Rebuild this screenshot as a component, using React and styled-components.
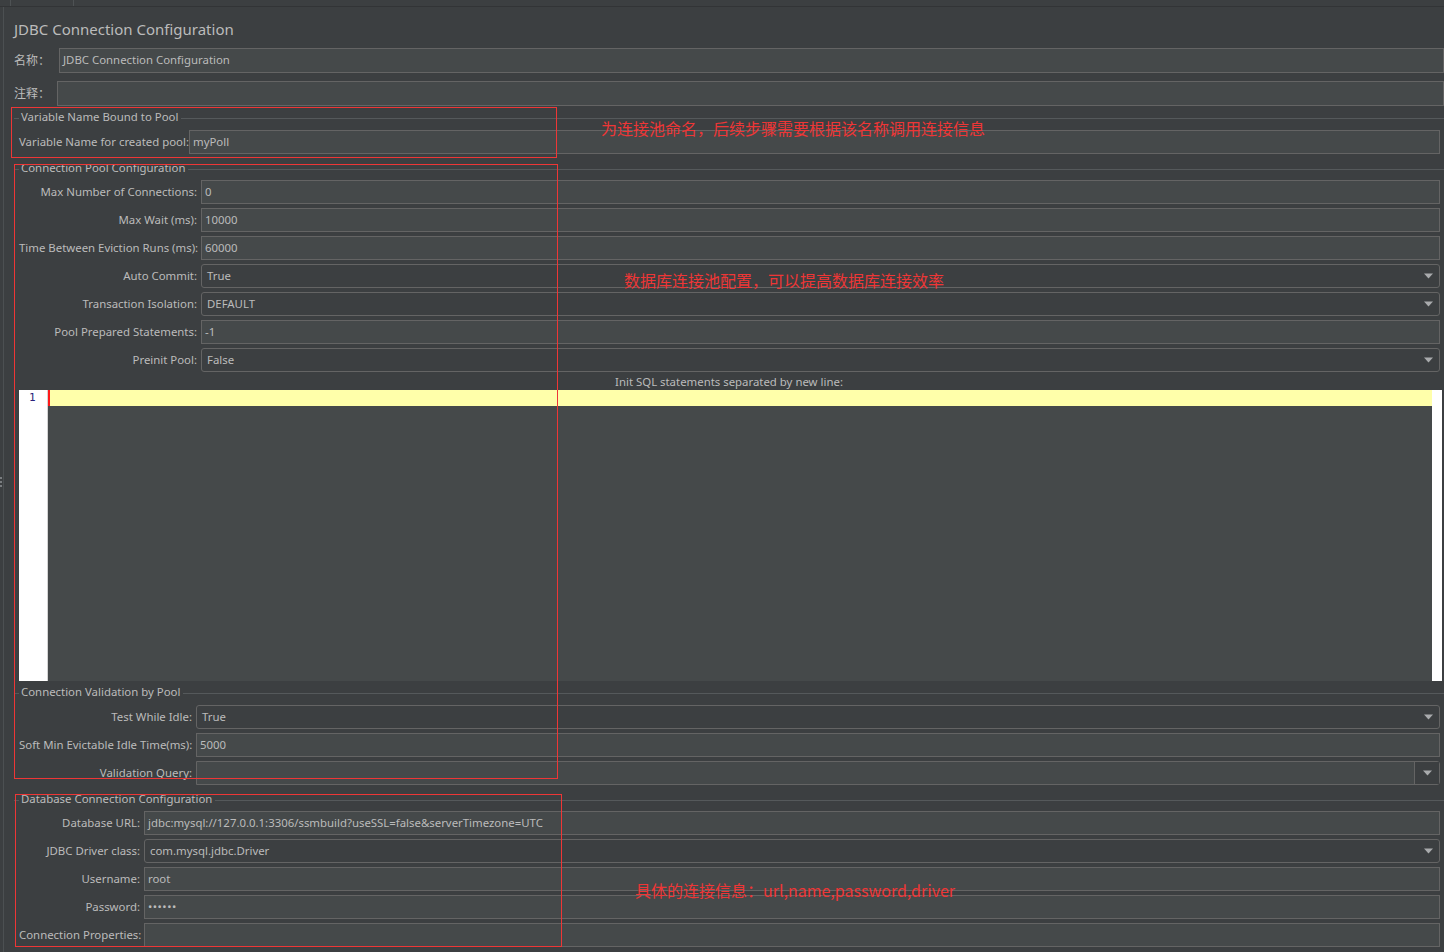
import React from 'react';
import styled, { createGlobalStyle } from 'styled-components';

const GlobalStyle = createGlobalStyle`
  html, body {
    margin: 0;
    padding: 0;
    background: #3c3f41;
  }
  body {
    font-family: "Noto Sans", "Noto Sans CJK SC", sans-serif;
    font-size: 11.4px;
    color: #bbbbbb;
  }
`;

const red = '#ee3636';
const uiSize = '11.4px';

const Page = styled.div`
  position: relative;
  width: 1444px;
  height: 952px;
  overflow: hidden;
  background: #3c3f41;
  display: flex;
  flex-direction: column;
`;

const TabStrip = styled.div`
  height: 6px;
  flex: none;
  display: flex;
  border-bottom: 1px solid #323436;
`;

const TabEdge = styled.div`
  width: ${p => p.$w}px;
  border-right: 1px solid #4e5254;
`;

const Body = styled.div`
  flex: 1;
  display: flex;
  min-height: 0;
`;

const Splitter = styled.div`
  position: relative;
  width: 3px;
  flex: none;
  border-right: 1px solid #4c5052;
`;

const Grip = styled.span`
  position: absolute;
  left: 0;
  top: 470px;
  width: 2px;
  height: 12px;
  background: repeating-linear-gradient(to bottom, #7a7d80 0 2px, transparent 2px 4px);
`;

const Content = styled.div`
  flex: 1;
  min-width: 0;
  padding-left: 10px;
  display: flex;
  flex-direction: column;
`;

const Title = styled.div`
  margin-top: 11px;
  height: 22px;
  line-height: 22px;
  font-size: 15px;
  color: #bbbbbb;
  margin-bottom: 1px;
`;

const TopRow = styled.div`
  display: grid;
  grid-template-columns: ${p => p.$label}px 1fr;
  align-items: center;
  margin-top: ${p => p.$top}px;
  height: 25px;
`;

const Label = styled.span`
  white-space: nowrap;
  text-align: ${p => (p.$left ? 'left' : 'right')};
  color: #bbbbbb;
  font-size: ${p => (p.$cjk ? '12px' : uiSize)};
  padding-bottom: 2px;
`;

const Field = styled.div`
  box-sizing: border-box;
  height: ${p => p.$h || 24}px;
  border: 1px solid #646464;
  background: #45494a;
  padding: 0 3px 2px;
  display: flex;
  align-items: center;
  color: #bbbbbb;
  font-size: ${uiSize};
  white-space: nowrap;
  overflow: hidden;
  letter-spacing: ${p => (p.$dots ? '0.5px' : 'normal')};
`;

const Combo = styled.div`
  box-sizing: border-box;
  height: 24px;
  border: 1px solid #646464;
  border-radius: 3px;
  background: #3c3f41;
  padding: 0 6px 0 5px;
  display: flex;
  align-items: center;
  justify-content: space-between;
  color: #bbbbbb;
  font-size: ${uiSize};
  & > span {
    padding-bottom: 2px;
  }
`;

const EditCombo = styled.div`
  box-sizing: border-box;
  height: 24px;
  border: 1px solid #646464;
  border-radius: 0 3px 3px 0;
  background: #45494a;
  display: flex;
`;

const EditArea = styled.div`
  flex: 1;
`;

const ArrowButton = styled.div`
  width: 23px;
  border-left: 1px solid #646464;
  background: #3c3f41;
  display: flex;
  align-items: center;
  justify-content: center;
  padding-left: 1px;
`;

const Arrow = () => (
  <svg width="9" height="6" viewBox="0 0 9 6">
    <path d="M0 0.5 H9 L4.5 5.5 Z" fill="#a9abad" />
  </svg>
);

const Section = styled.div`
  margin-top: ${p => p.$top}px;
  display: flex;
  flex-direction: column;
`;

const Header = styled.div`
  height: 14px;
  display: flex;
  align-items: center;
  margin-bottom: ${p => p.$gap}px;
  &::before {
    content: '';
    width: 5px;
    height: 1px;
    background: #55595b;
  }
  &::after {
    content: '';
    flex: 1;
    height: 1px;
    background: #55595b;
  }
`;

const HeaderText = styled.span`
  padding: 0 3px 0 2px;
  line-height: 14px;
  font-size: ${uiSize};
  color: #bbbbbb;
  position: relative;
  top: -1px;
`;

const Rows = styled.div`
  display: grid;
  grid-template-columns: ${p => p.$label}px 1fr;
  grid-auto-rows: 24px;
  column-gap: 4px;
  row-gap: 4px;
  align-items: center;
  padding: 0 4px 0 5px;
`;

const InitLabel = styled.div`
  margin-top: 3px;
  height: 14px;
  line-height: 13px;
  text-align: center;
  font-size: ${uiSize};
  color: #bbbbbb;
`;

const Editor = styled.div`
  margin: 1px 2px 0 5px;
  height: 291px;
  display: flex;
`;

const Gutter = styled.div`
  width: 29px;
  background: #ffffff;
  border-right: 1px solid #d4d4d4;
  padding-left: 10px;
  box-sizing: border-box;
  font-family: "DejaVu Sans Mono", "Liberation Mono", monospace;
  font-size: 11px;
  line-height: 15px;
  color: #2a1f7a;
`;

const CodeArea = styled.div`
  flex: 1;
  background: #45494a;
`;

const CurrentLine = styled.div`
  height: 16px;
  background: #ffffaa;
  border-left: 2px solid #ff1a1a;
`;

const ScrollStrip = styled.div`
  width: 10px;
  background: #ffffff;
`;

const RedBox = styled.div`
  position: absolute;
  left: ${p => p.$x}px;
  top: ${p => p.$y}px;
  width: ${p => p.$w}px;
  height: ${p => p.$h}px;
  border: 1px solid ${red};
  box-sizing: border-box;
  pointer-events: none;
`;

const Note = styled.div`
  position: absolute;
  left: ${p => p.$x}px;
  top: ${p => p.$y}px;
  font-family: "Noto Sans CJK SC", "Noto Sans", sans-serif;
  font-size: 16px;
  line-height: 20px;
  color: ${red};
  white-space: nowrap;
`;

const TextRow = ({ label, value, dots }) => (
  <>
    <Label>{label}</Label>
    <Field $dots={dots}>{value}</Field>
  </>
);

const ComboRow = ({ label, value }) => (
  <>
    <Label>{label}</Label>
    <Combo>
      <span>{value}</span>
      <Arrow />
    </Combo>
  </>
);

export default function App() {
  return (
    <Page>
      <GlobalStyle />
      <TabStrip>
        <TabEdge $w={10} />
        <TabEdge $w={62} />
      </TabStrip>
      <Body>
        <Splitter>
          <Grip />
        </Splitter>
        <Content>
          <Title>JDBC Connection Configuration</Title>
          <TopRow $label={45} $top={7}>
            <Label $left $cjk>名称：</Label>
            <Field $h={25}>JDBC Connection Configuration</Field>
          </TopRow>
          <TopRow $label={43} $top={8}>
            <Label $left $cjk>注释：</Label>
            <Field $h={25} />
          </TopRow>

          <Section $top={5}>
            <Header $gap={5}><HeaderText>Variable Name Bound to Pool</HeaderText></Header>
            <Rows $label={166}>
              <TextRow label="Variable Name for created pool:" value="myPoll" />
            </Rows>
          </Section>

          <Section $top={8}>
            <Header $gap={4}><HeaderText>Connection Pool Configuration</HeaderText></Header>
            <Rows $label={178}>
              <TextRow label="Max Number of Connections:" value="0" />
              <TextRow label="Max Wait (ms):" value="10000" />
              <TextRow label="Time Between Eviction Runs (ms):" value="60000" />
              <ComboRow label="Auto Commit:" value="True" />
              <ComboRow label="Transaction Isolation:" value="DEFAULT" />
              <TextRow label="Pool Prepared Statements:" value="-1" />
              <ComboRow label="Preinit Pool:" value="False" />
            </Rows>
            <InitLabel>Init SQL statements separated by new line:</InitLabel>
            <Editor>
              <Gutter>1</Gutter>
              <CodeArea>
                <CurrentLine />
              </CodeArea>
              <ScrollStrip />
            </Editor>
          </Section>

          <Section $top={5}>
            <Header $gap={5}><HeaderText>Connection Validation by Pool</HeaderText></Header>
            <Rows $label={173}>
              <ComboRow label="Test While Idle:" value="True" />
              <TextRow label="Soft Min Evictable Idle Time(ms):" value="5000" />
              <Label>Validation Query:</Label>
              <EditCombo>
                <EditArea />
                <ArrowButton><Arrow /></ArrowButton>
              </EditCombo>
            </Rows>
          </Section>

          <Section $top={8}>
            <Header $gap={4}><HeaderText>Database Connection Configuration</HeaderText></Header>
            <Rows $label={121}>
              <TextRow label="Database URL:" value="jdbc:mysql://127.0.0.1:3306/ssmbuild?useSSL=false&serverTimezone=UTC" />
              <ComboRow label="JDBC Driver class:" value="com.mysql.jdbc.Driver" />
              <TextRow label="Username:" value="root" />
              <TextRow label="Password:" value="••••••" dots />
              <TextRow label="Connection Properties:" value="" />
            </Rows>
          </Section>
        </Content>
      </Body>

      <RedBox $x={11} $y={107} $w={546} $h={51} />
      <RedBox $x={14} $y={164} $w={544} $h={615} />
      <RedBox $x={15} $y={794} $w={547} $h={153} />

      <Note $x={601} $y={118}>为连接池命名，后续步骤需要根据该名称调用连接信息</Note>
      <Note $x={624} $y={270}>数据库连接池配置，可以提高数据库连接效率</Note>
      <Note $x={635} $y={880}>具体的连接信息：url,name,password,driver</Note>
    </Page>
  );
}
